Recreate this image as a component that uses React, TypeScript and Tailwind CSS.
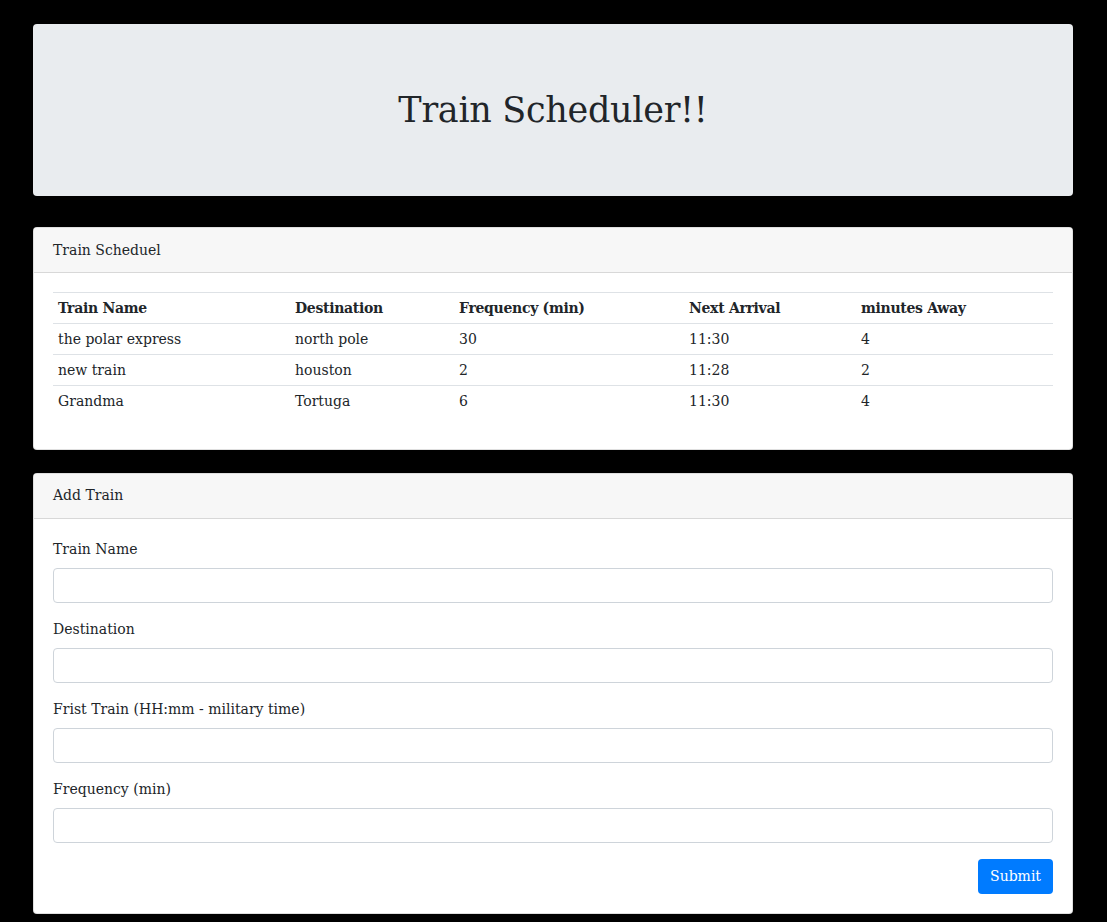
import React from "react";

const rows = [
  ["the polar express", "north pole", "30", "11:30", "4"],
  ["new train", "houston", "2", "11:28", "2"],
  ["Grandma", "Tortuga", "6", "11:30", "4"],
];

const fields = [
  "Train Name",
  "Destination",
  "Frist Train (HH:mm - military time)",
  "Frequency (min)",
];

export default function App() {
  return (
    <div
      className="min-h-[922px] bg-black pl-[33px] pr-[34px] pt-[24px] pb-[9px] text-[#212529] text-[14px] leading-[21px]"
      style={{ fontFamily: '"DejaVu Serif", serif' }}
    >
      <div className="h-[172px] rounded-[4px] bg-[#e9ecef] flex items-center justify-center">
        <h1 className="text-[35px] leading-[44px] font-normal text-[#212529] tracking-[-0.3px]">
          Train Scheduler!!
        </h1>
      </div>

      <div className="mt-[31px] rounded-[4px] border border-[rgba(0,0,0,0.125)] bg-white overflow-hidden">
        <div className="h-[45px] px-[19px] flex items-center bg-[#f7f7f7] border-b border-[rgba(0,0,0,0.125)]">
          Train Scheduel
        </div>
        <div className="px-[19px] pt-[19px] pb-[20px]">
          <table className="w-full border-collapse mb-[12px] table-fixed">
            <colgroup>
              <col style={{ width: 237 }} />
              <col style={{ width: 164 }} />
              <col style={{ width: 230 }} />
              <col style={{ width: 172 }} />
              <col />
            </colgroup>
            <thead>
              <tr className="border-t border-b border-[#dee2e6]">
                {["Train Name", "Destination", "Frequency (min)", "Next Arrival", "minutes Away"].map((h) => (
                  <th key={h} className="text-left font-bold px-[5px] py-0 h-[31px] tracking-[-0.3px]">
                    {h}
                  </th>
                ))}
              </tr>
            </thead>
            <tbody>
              {rows.map((r, i) => (
                <tr key={i} className={i > 0 ? "border-t border-[#dee2e6]" : ""}>
                  {r.map((c, j) => (
                    <td key={j} className="px-[5px] py-0 h-[31px]">
                      {c}
                    </td>
                  ))}
                </tr>
              ))}
            </tbody>
          </table>
        </div>
      </div>

      <div className="mt-[23px] rounded-[4px] border border-[rgba(0,0,0,0.125)] bg-white overflow-hidden">
        <div className="h-[45px] px-[19px] flex items-center bg-[#f7f7f7] border-b border-[rgba(0,0,0,0.125)]">
          Add Train
        </div>
        <div className="px-[19px] pt-[20px] pb-[19px]">
          {fields.map((f) => (
            <div key={f} className="mb-[16px]">
              <label className="block mb-[8px]">{f}</label>
              <input
                type="text"
                className="block w-full h-[35px] rounded-[4px] border border-[#ced4da] bg-white px-[12px]"
              />
            </div>
          ))}
          <div className="flex justify-end">
            <button className="h-[35px] px-[12px] rounded-[4px] bg-[#007bff] text-white text-[14px]">
              Submit
            </button>
          </div>
        </div>
      </div>
    </div>
  );
}
